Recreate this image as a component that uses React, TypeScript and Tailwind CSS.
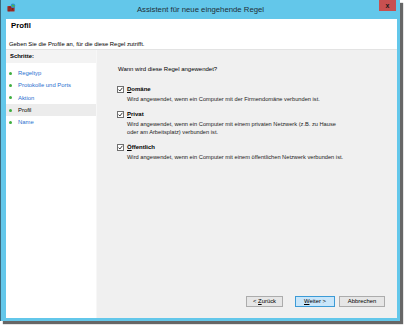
import React from "react";

// steps shown in the left panel
const steps = [
  { label: "Regeltyp", active: false },
  { label: "Protokolle und Ports", active: false },
  { label: "Aktion", active: false },
  { label: "Profil", active: true },
  { label: "Name", active: false },
];

// small firewall icon in the title bar
function FirewallIcon() {
  return (
    <svg width="9" height="9" viewBox="0 0 9 9">
      <rect x="0.5" y="3" width="7" height="5.5" fill="#a8322a" />
      <path d="M0.5 5h7M0.5 7h7M3 3v2M5.5 5v2M2 7v1.5" stroke="#6e1a14" strokeWidth="0.6" />
      <circle cx="6" cy="2.8" r="2.3" fill="#2f8fd8" />
      <path d="M4.6 2.2c0.6-0.9 1.5-0.9 1.9-0.3 0.5 0.6 1.3 0.5 1.6 1.2-0.4 0.9-1.2 0.8-1.7 0.5-0.5-0.3-1.2 0.2-1.8-0.4z" fill="#4cbb3f" />
    </svg>
  );
}

// the checkbox with a tick
function CheckBox() {
  return (
    <span className="w-[7px] h-[7px] border border-[#707070] bg-white flex items-center justify-center shrink-0">
      <svg width="5" height="5" viewBox="0 0 5 5">
        <path d="M0.6 2.6l1.3 1.4L4.4 0.8" fill="none" stroke="#222" strokeWidth="0.9" />
      </svg>
    </span>
  );
}

type Option = {
  key: string;
  rest: string;
  lines: string[];
};

const options: Array<Option> = [
  {
    key: "D",
    rest: "omäne",
    lines: ["Wird angewendet, wenn ein Computer mit der Firmendomäne verbunden ist."],
  },
  {
    key: "P",
    rest: "rivat",
    lines: [
      "Wird angewendet, wenn ein Computer mit einem privaten Netzwerk (z.B. zu Hause",
      "oder am Arbeitsplatz) verbunden ist.",
    ],
  },
  {
    key: "Ö",
    rest: "ffentlich",
    lines: ["Wird angewendet, wenn ein Computer mit einem öffentlichen Netzwerk verbunden ist."],
  },
];

export default function App() {
  return (
    <div className="w-[404px] h-[327px] bg-white font-['Liberation_Sans',Arial,sans-serif] text-black">
      <div className="w-[400px] h-[321px] flex flex-col bg-[#63c7ea] border-l border-[#3b6a7e] shadow-[3px_3px_1px_rgba(0,0,0,0.6)]">
        {/* title bar */}
        <div className="h-[19px] grid grid-cols-[30px_1fr_30px] items-start shrink-0">
          <div className="pl-[6px] pt-[3px]">
            <FirewallIcon />
          </div>
          <div className="text-center text-[7.75px] leading-[19px] text-[#1f2f38]">
            Assistent für neue eingehende Regel
          </div>
          <div className="flex justify-end pr-[4px]">
            <div className="w-[17px] h-[11px] bg-[#c75050] flex items-center justify-center text-[7px] font-bold leading-none text-[#1a1a1a]">
              x
            </div>
          </div>
        </div>

        {/* window content */}
        <div className="flex-1 flex flex-col ml-[5px] mr-[3px] mb-[3px] bg-white min-h-0">
          {/* header */}
          <div className="h-[31px] shrink-0 bg-white border-b border-[#e3e3e3]">
            <div className="pl-[5px] pt-[2px] text-[7.8px] leading-[9px] font-bold">Profil</div>
            <div className="pl-[3px] mt-[10px] text-[5.9px] leading-[8px]">
              Geben Sie die Profile an, für die diese Regel zutrifft.
            </div>
          </div>

          {/* body */}
          <div className="flex-1 flex min-h-0">
            {/* steps */}
            <div className="w-[91px] bg-white border-r border-[#f7f7f7] shrink-0">
              <div className="h-[13px] bg-[#f3f3f3] pl-[4px] text-[5.9px] leading-[13px] font-bold">
                Schritte:
              </div>
              <div className="pt-[4px]">
                {steps.map((step) => (
                  <div
                    key={step.label}
                    className={
                      step.active
                        ? "h-[12.3px] flex items-center bg-[#ececec]"
                        : "h-[12.3px] flex items-center"
                    }
                  >
                    <span className="ml-[3px] w-[3px] h-[3px] rounded-full bg-[#3fae3f] shrink-0" />
                    <span
                      className={
                        step.active
                          ? "ml-[6px] text-[5.9px] leading-[8px] text-black"
                          : "ml-[6px] text-[5.9px] leading-[8px] text-[#2a6fcf]"
                      }
                    >
                      {step.label}
                    </span>
                  </div>
                ))}
              </div>
            </div>

            {/* main */}
            <div className="flex-1 flex flex-col bg-[#f0f0f0]">
              <div className="pl-[21px] pt-[15px] text-[6px] leading-[8px]">
                Wann wird diese Regel angewendet?
              </div>
              <div className="pl-[20px] mt-[12px] flex flex-col gap-[7px]">
                {options.map((opt) => (
                  <div key={opt.key}>
                    <div className="flex items-center gap-[3px] h-[8px]">
                      <CheckBox />
                      <span className="text-[6px] leading-[8px] font-bold">
                        <span className="underline">{opt.key}</span>
                        {opt.rest}
                      </span>
                    </div>
                    <div className="pl-[10px] mt-[2px] text-[5.7px] leading-[8px] text-[#222]">
                      {opt.lines.map((line) => (
                        <div key={line}>{line}</div>
                      ))}
                    </div>
                  </div>
                ))}
              </div>

              {/* buttons */}
              <div className="mt-auto pb-[11px] pr-[12px] flex justify-end items-center gap-[4px]">
                <button className="w-[37px] h-[11px] border border-[#acacac] bg-[#e6e6e6] text-[5.9px] leading-none mr-[8px]">
                  &lt; <span className="underline">Z</span>urück
                </button>
                <button className="w-[40px] h-[11px] border border-[#3c9bd6] bg-[#c9e6fa] text-[5.9px] leading-none">
                  <span className="underline">W</span>eiter &gt;
                </button>
                <button className="w-[46px] h-[11px] border border-[#acacac] bg-[#e6e6e6] text-[5.9px] leading-none">
                  Abbrechen
                </button>
              </div>
            </div>
          </div>
        </div>
      </div>
    </div>
  );
}
